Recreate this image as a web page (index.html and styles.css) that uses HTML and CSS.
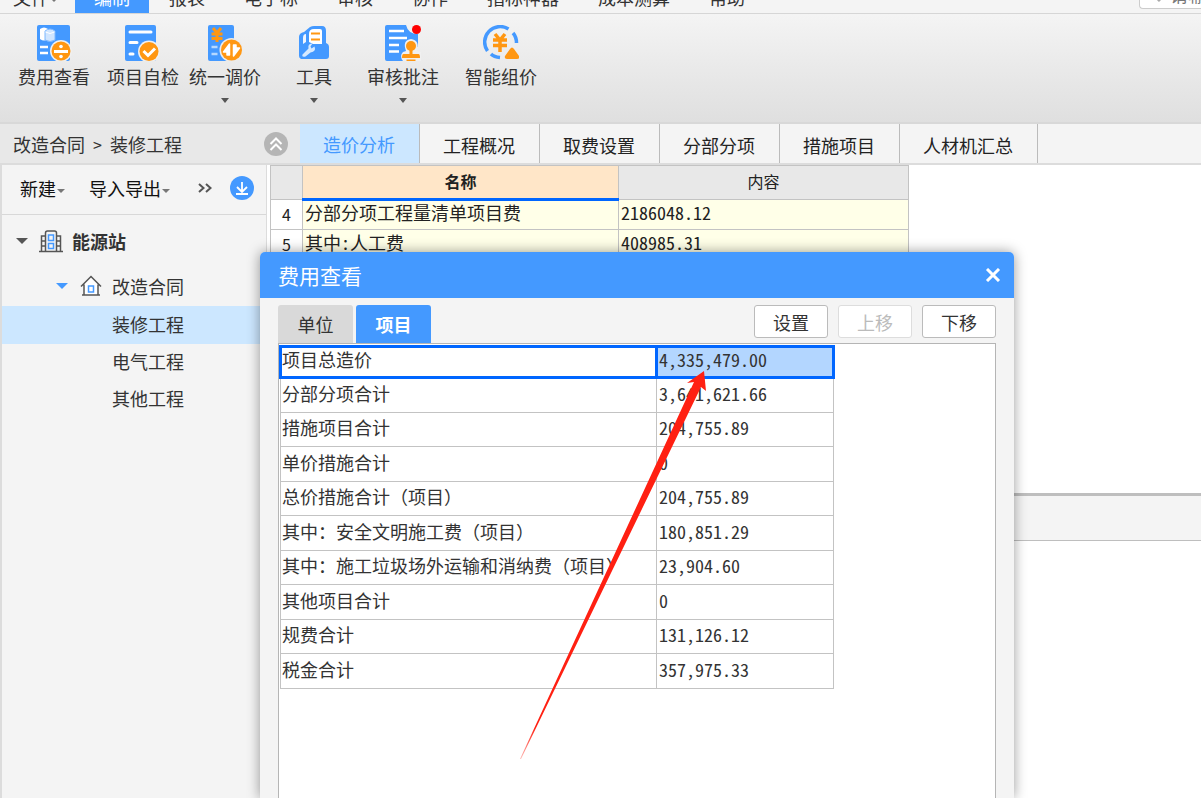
FILE: index.html
```html
<!DOCTYPE html>
<html lang="zh-CN">
<head>
<meta charset="utf-8">
<meta name="viewport" content="width=device-width, initial-scale=1">
<title>费用查看</title>
<link rel="stylesheet" href="styles.css">
</head>
<body>
<div class="app">
  <header class="menubar">
    <nav class="menu">
      <button class="menu-item menu-file" type="button">文件<span class="caret caret-small"></span></button>
      <button class="menu-item is-active" type="button">编制</button>
      <button class="menu-item" type="button">报表</button>
      <button class="menu-item" type="button">电子标</button>
      <button class="menu-item" type="button">审核</button>
      <button class="menu-item" type="button">协作</button>
      <button class="menu-item" type="button">指标神器</button>
      <button class="menu-item" type="button">成本测算</button>
      <button class="menu-item" type="button">帮助</button>
    </nav>
    <label class="search">
      <svg class="search-icon" viewBox="0 0 18 18" aria-hidden="true"><circle cx="7" cy="7" r="5" fill="none" stroke="#aaa" stroke-width="2"/><path d="M11 11l5 5" stroke="#aaa" stroke-width="3"/></svg>
      <input class="search-input" type="text" placeholder="请输入" aria-label="搜索">
    </label>
  </header>

  <div class="ribbon">
    <button class="tool" type="button">
      <svg class="tool-icon" viewBox="0 0 36 36" aria-hidden="true">
        <rect x="1" y="0" width="33" height="36" rx="2" fill="#49f"/>
        <path d="M4 4q4-3 8 0v10q-4 3-8 0z" fill="#fff"/>
        <path d="M9 6q5-4 10 0v9q-5 3-10 0z" fill="#cfe5ff" stroke="#7db8ff" stroke-width="1"/>
        <path d="M9.500 7q4.500 3 9 0" fill="none" stroke="#fff" stroke-width="1"/>
        <path d="M4 22h8M4 28h8" stroke="#fff" stroke-width="2.500"/>
        <circle cx="25" cy="26" r="11" fill="#f0f0f0"/><circle cx="25" cy="26" r="9.500" fill="#ff9712"/>
        <path d="M18 26.500h14" stroke="#fff" stroke-width="3"/><circle cx="25" cy="21.500" r="1.800" fill="#fff"/><circle cx="25" cy="31.500" r="1.800" fill="#fff"/>
      </svg>
      <span>费用查看</span>
    </button>
    <button class="tool" type="button">
      <svg class="tool-icon" viewBox="0 0 36 36" aria-hidden="true">
        <rect x="0" y="0" width="31" height="36" rx="2" fill="#49f"/>
        <path d="M5 7h21M5 17.500h7M5 29h3" stroke="#fff" stroke-width="3" stroke-linecap="round"/>
        <circle cx="24" cy="26.500" r="11" fill="#f0f0f0"/><circle cx="24" cy="26.500" r="9.500" fill="#ff9712"/>
        <path d="M18.500 26l4.500 4.500 7-7" fill="none" stroke="#fff" stroke-width="3"/>
      </svg>
      <span>项目自检</span>
    </button>
    <button class="tool tool-near" type="button">
      <svg class="tool-icon" viewBox="0 0 36 36" aria-hidden="true">
        <rect x="1" y="0" width="26" height="36" rx="2" fill="#49f"/>
        <path d="M6 3l4 5 4-5M4.500 9h11M4.500 13.500h11M10 8v9" fill="none" stroke="#ff9712" stroke-width="3"/>
        <path d="M4.500 22h6M4.500 29h6" stroke="#b5d8ff" stroke-width="2.500"/>
        <circle cx="24.500" cy="25" r="12" fill="#ececec"/><circle cx="24.500" cy="25" r="10.500" fill="#ff9712"/>
        <path d="M22.500 19v11h-2.500v-3h-3.500zM26.500 31V20h2.500v3h3.500z" fill="#fff" stroke="#fff" stroke-width="1.500" stroke-linejoin="round"/>
      </svg>
      <span>统一调价</span>
      <span class="caret"></span>
    </button>
    <button class="tool" type="button">
      <svg class="tool-icon" viewBox="0 0 36 36" aria-hidden="true">
        <path d="M5 34q-2-1-2-3V12q0-4 5-5l6-5q2-1 4-1h8q4 0 4 5v12q3 1 3 4v9q0 3-3 3H6z" fill="#49f"/>
        <path d="M13 17V9q0-5 5-5h6q2 0 2 2v13H17z" fill="#fff"/>
        <path d="M7 19v-6q0-4 3-4v8z" fill="#f0f6ff"/>
        <path d="M15 8.500h9M15 14.500h9" stroke="#ff9712" stroke-width="2.200"/>
        <path d="M6.500 29.500l6-6q-1-5 4-5l-2 3 1 2 3-2q2 5-4 6l-5 4q-4 1-3-2z" fill="#d7eaff"/>
      </svg>
      <span>工具</span>
      <span class="caret"></span>
    </button>
    <button class="tool" type="button">
      <svg class="tool-icon" viewBox="0 0 36 36" aria-hidden="true">
        <path d="M2 0h19q2 9 12 9v13H22v14H2q-2 0-2-2V2q0-2 2-2z" fill="#49f"/>
        <path d="M4 6h15M4 13h18M4 20h10M4 26.500h10" stroke="#fff" stroke-width="2.500"/>
        <path d="M18 36q-4-5 0-9l3-1q-4-11 5-12 9 1 6 12l4 1v9z" fill="#f0f0f0"/>
        <circle cx="26" cy="21" r="5" fill="#ff9712"/><path d="M24.500 24h3v5h6q1.500 0 1.500 4H17q0-4 1.500-4h6zM21.500 34.500h9V36h-9z" fill="#ff9712"/>
        <circle cx="31.500" cy="4.500" r="4.500" fill="#f00"/>
      </svg>
      <span>审核批注</span>
      <span class="caret"></span>
    </button>
    <button class="tool tool-far" type="button">
      <svg class="tool-icon" viewBox="0 0 36 36" aria-hidden="true">
        <g fill="none" stroke="#49f" stroke-width="3.500"><path d="M4.500 26A15.500 15.500 0 0 1 25.500 4"/><path d="M30 8q3.500 4 3.500 10"/><path d="M8 29q3 3 9 3.500"/></g>
        <path d="M12 9l5 6 5-6M10 15h14M10 20.500h14M17 14v13" fill="none" stroke="#ff9712" stroke-width="3.500"/>
        <path d="M22 31l5-7q2-3 4 0l5 7q1 3-2 3H24q-3 0-2-3z" fill="#ff9712"/>
      </svg>
      <span>智能组价</span>
    </button>
  </div>

  <div class="pathbar">
    <div class="breadcrumb">
      <span>改造合同</span><span class="crumb-sep">&gt;</span><span>装修工程</span>
      <button class="round round-grey" type="button" aria-label="收起">
        <svg viewBox="0 0 24 24" aria-hidden="true"><path d="M6.500 12L12 6.500l5.500 5.500M6.500 18l5.500-5.500 5.500 5.500" fill="none" stroke="#fff" stroke-width="2"/></svg>
      </button>
    </div>
    <nav class="tabs">
      <button class="tab is-active" type="button">造价分析</button>
      <button class="tab" type="button">工程概况</button>
      <button class="tab" type="button">取费设置</button>
      <button class="tab" type="button">分部分项</button>
      <button class="tab" type="button">措施项目</button>
      <button class="tab" type="button">人材机汇总</button>
    </nav>
  </div>

  <div class="workspace">
    <aside class="sidebar">
      <div class="side-tools">
        <button class="side-button" type="button">新建<span class="caret caret-small"></span></button>
        <button class="side-button" type="button">导入导出<span class="caret caret-small"></span></button>
        <button class="more" type="button" aria-label="更多"><svg viewBox="0 0 14 10" aria-hidden="true"><path d="M1 1l4.500 4L1 9M8 1l4.500 4L8 9" fill="none" stroke="#555" stroke-width="2"/></svg></button>
        <button class="round round-blue" type="button" aria-label="下载">
          <svg viewBox="0 0 24 24" aria-hidden="true"><path d="M12 6v9M7 11l5 5 5-5M6 18h12" fill="none" stroke="#fff" stroke-width="1.800"/></svg>
        </button>
      </div>
      <ul class="tree">
        <li class="node node-root"><span class="caret caret-large"></span>
          <svg class="node-icon" viewBox="0 0 24 24" aria-hidden="true"><g fill="none" stroke="#555" stroke-width="1.500"><path d="M0 22.500h24M6.500 22V4q0-2 2-2h7q2 0 2 2v18M6.500 7h-4v15M17.500 7h4v15M2.500 12h4M2.500 17h4M17.500 12h4M17.500 17h4"/></g><g fill="none" stroke="#49f" stroke-width="1.500"><path d="M9.500 6h5v5.500h-5zM9.500 14.500h5v5h-5z"/></g></svg>
          <span>能源站</span></li>
        <li class="node node-branch"><span class="caret caret-large caret-blue"></span>
          <svg class="node-icon" viewBox="0 0 24 24" aria-hidden="true"><path d="M5 10.500L12 4l7 6.500V21H5z" fill="#fff"/><path d="M2 12.500l10-10 10 10M5 10.500V21M19 10.500V21M3 21h18" fill="none" stroke="#555" stroke-width="1.500"/><path d="M9.500 12h5v6h-5z" fill="none" stroke="#49f" stroke-width="1.500"/></svg>
          <span>改造合同</span></li>
        <li class="node node-leaf is-selected">装修工程</li>
        <li class="node node-leaf">电气工程</li>
        <li class="node node-leaf">其他工程</li>
      </ul>
    </aside>
    <main class="main">
      <div class="upper">
        <table class="sheet">
          <colgroup><col class="col-index"><col class="col-name"><col class="col-value"></colgroup>
          <thead><tr><th></th><th class="is-current">名称</th><th>内容</th></tr></thead>
          <tbody>
            <tr><th>4</th><td>分部分项工程量清单项目费</td><td class="num">2186048.12</td></tr>
            <tr><th>5</th><td>其中<span class="num">:</span>人工费</td><td class="num">408985.31</td></tr>
          </tbody>
        </table>
      </div>
      <div class="lower"><div class="lower-bar"></div></div>
    </main>
  </div>

  <section class="dialog" role="dialog" aria-labelledby="dialog-title">
    <header class="dialog-head">
      <h1 class="dialog-title" id="dialog-title">费用查看</h1>
      <button class="close" type="button" aria-label="关闭"><svg viewBox="0 0 16 14" aria-hidden="true"><path d="M2 1l12 12M14 1L2 13" stroke="#fff" stroke-width="3"/></svg></button>
    </header>
    <div class="dialog-bar">
      <button class="dtab" type="button">单位</button>
      <button class="dtab is-active" type="button">项目</button>
      <div class="actions">
        <button class="action" type="button">设置</button>
        <button class="action" type="button" disabled>上移</button>
        <button class="action" type="button">下移</button>
      </div>
    </div>
    <div class="dialog-body">
      <table class="costs">
        <colgroup><col class="cost-name"><col class="cost-value"></colgroup>
        <tbody>
          <tr class="is-selected"><td>项目总造价</td><td class="num">4,335,479.00</td></tr>
          <tr><td>分部分项合计</td><td class="num">3,641,621.66</td></tr>
          <tr><td>措施项目合计</td><td class="num">204,755.89</td></tr>
          <tr><td>单价措施合计</td><td class="num">0</td></tr>
          <tr><td>总价措施合计（项目）</td><td class="num">204,755.89</td></tr>
          <tr><td>其中：安全文明施工费（项目）</td><td class="num">180,851.29</td></tr>
          <tr><td>其中：施工垃圾场外运输和消纳费（项目）</td><td class="num">23,904.60</td></tr>
          <tr><td>其他项目合计</td><td class="num">0</td></tr>
          <tr><td>规费合计</td><td class="num">131,126.12</td></tr>
          <tr><td>税金合计</td><td class="num">357,975.33</td></tr>
        </tbody>
      </table>
    </div>
    <svg class="pointer" viewBox="0 0 188 390" aria-hidden="true">
      <defs><linearGradient id="fade" x1="0" y1="1" x2="0" y2="0"><stop offset="0" stop-color="#ff2012" stop-opacity=".3"/><stop offset=".08" stop-color="#ff2012"/></linearGradient></defs>
      <path d="M184 1l2 20-5-4L1 389H0L174 12l-7 1z" fill="url(#fade)"/>
    </svg>
  </section>
</div>
</body>
</html>
```
FILE: styles.css
```css
* { box-sizing: border-box; }

body {
  margin: 0;
  overflow: hidden;
  background: #fff;
  color: #333;
  font: 18px/24px "Noto Sans CJK SC", sans-serif;
}

button, input {
  margin: 0;
  padding: 0;
  border: 0;
  background: none;
  color: inherit;
  font: inherit;
}

.app {
  position: relative;
  display: flex;
  flex-direction: column;
  height: 100vh;
  overflow: hidden;
}

.caret {
  display: inline-block;
  border: 4px solid transparent;
  border-top: 5px solid #555;
  border-bottom: 0;
}
.caret-small { border-width: 4px 4px 0; margin-left: 1px; vertical-align: 3px; border-top-color: #777; }
.caret-large { border-width: 6px 6px 0; }
.caret-blue { border-top-color: #49f; }

.num { font-feature-settings: "hwid"; }

/* Menu bar */
.menubar {
  display: flex;
  align-items: flex-end;
  flex: none;
  height: 14px;
  overflow: hidden;
  border-bottom: 1px solid #d6d6d6;
  background: #f4f4f4;
}
.menu { display: flex; gap: 1px; }
.menu-item { padding: 0 19px 4px; line-height: 24px; white-space: nowrap; }
.menu-item.menu-file { padding: 0 16px 4px 13px; }
.menu-item.is-active { background: #49f; color: #fff; }
.search {
  display: flex;
  align-items: center;
  gap: 8px;
  width: 62px;
  height: 28px;
  margin: 0 0 4px auto;
  padding: 0 0 2px 4px;
  overflow: hidden;
  border: 1px solid #ccc;
  border-right: 0;
  border-radius: 4px 0 0 4px;
  background: #fff;
}
.search-icon { flex: none; width: 18px; height: 18px; }
.search-input { flex: none; width: 60px; }
.search-input::placeholder { color: #777; opacity: 1; }

/* Ribbon */
.ribbon {
  display: flex;
  gap: 17px;
  flex: none;
  height: 110px;
  padding: 11px 18px 0;
  border-bottom: 2px solid #d8d8d8;
  background: linear-gradient(#f4f4f4, #dfdfdf);
}
.tool {
  display: flex;
  flex-direction: column;
  align-items: center;
  gap: 3px;
  width: 72px;
  white-space: nowrap;
}
.tool .caret { margin-top: 7px; }
.tool-near { margin-left: -7px; }
.tool-far { margin-left: 9px; }
.tool-icon { flex: none; width: 36px; height: 36px; }

/* Path and page tabs */
.pathbar {
  display: flex;
  flex: none;
  height: 41px;
  border-bottom: 2px solid #dcdcdc;
  background: #f4f4f4;
}
.breadcrumb {
  display: flex;
  align-items: center;
  gap: 8px;
  flex: none;
  width: 300px;
  padding: 0 12px 0 13px;
  background: #e8e8e8;
}
.crumb-sep { font-size: 16px; }
.round { width: 24px; height: 24px; border-radius: 50%; }
.round svg { display: block; width: 24px; height: 24px; }
.round-grey { margin-left: auto; background: #b5b5b5; }
.round-blue { margin-left: auto; background: #49f; }
.tabs { display: flex; }
.tab {
  min-width: 120px;
  padding: 2px 24px 0 23px;
  border-right: 1px solid #bbb;
  color: #222;
  white-space: nowrap;
}
.tab.is-active { background: #cce7ff; color: #49f; padding-top: 0; }

/* Workspace */
.workspace { display: flex; flex: 1; min-height: 0; }
.sidebar {
  flex: none;
  width: 267px;
  border: solid #dcdcdc;
  border-width: 0 1px 0 2px;
  background: #f4f4f4;
}
.side-tools {
  display: flex;
  align-items: center;
  gap: 24px;
  height: 50px;
  padding: 0 10px 3px 18px;
  border-bottom: 1px solid #d8d8d8;
  color: #111;
}
.side-tools .more { margin-left: 4px; }
.side-tools .round { margin-left: -6px; }
.side-button { white-space: nowrap; }
.more svg { display: block; width: 14px; height: 10px; }
.tree { margin: 0; padding: 0; list-style: none; }
.node { display: flex; align-items: center; height: 37px; padding-bottom: 3px; }
.node-icon { width: 24px; height: 24px; margin: 0 9px 0 11px; }
.node-root { height: 54px; padding-left: 14px; font-weight: 700; }
.node-branch { padding-left: 54px; }
.node-leaf { padding-left: 110px; }
.node.is-selected { height: 38px; background: #cce7ff; }

.main { display: flex; flex: 1; flex-direction: column; min-width: 0; }
.upper { flex: 1; min-height: 0; overflow: hidden; padding-left: 3px; }
.lower { height: 305px; border-top: 3px solid #bebebe; }
.lower-bar { height: 45px; border-bottom: 1px solid #bebebe; background: #f4f4f4; }

.sheet { width: 639px; border-collapse: collapse; table-layout: fixed; color: #222; }
.sheet th, .sheet td {
  height: 30px;
  padding: 0 3px 2px;
  border: 1px solid #c3c3c3;
  line-height: 22px;
  white-space: nowrap;
}
.sheet td { padding: 0 2px 6px; background: #ffffe8; }
.sheet th { font-size: 16px; font-weight: 400; }
.sheet tbody th { background: #fff; }
.sheet thead th { height: 34px; padding-bottom: 4px; background: #e8e8e8; }
.sheet thead .is-current { padding-bottom: 2px; border-bottom: 3px solid #06f; background: #ffe6c8; font-weight: 700; }
.col-index { width: 32px; }
.col-name { width: 316px; }
.col-value { width: 290px; }

/* Floating dialog */
.dialog {
  position: absolute;
  top: 252px;
  bottom: 0;
  left: 260px;
  display: flex;
  flex-direction: column;
  width: 754px;
  border-radius: 5px 5px 0 0;
  background: #f4f4f4;
  box-shadow: 0 0 13px rgba(0, 0, 0, .4);
}
.dialog-head {
  display: flex;
  align-items: center;
  justify-content: space-between;
  height: 46px;
  padding: 0 13px 0 18px;
  border-radius: 5px 5px 0 0;
  background: #49f;
  color: #fff;
}
.dialog-title { margin: 0; padding-bottom: 1px; font-size: 21px; font-weight: 400; }
.close svg { display: block; width: 16px; height: 14px; }
.dialog-bar { display: flex; gap: 3px; height: 45px; padding: 7px 18px 0; }
.dtab { width: 75px; border-radius: 3px 3px 0 0; background: #d9d9d9; }
.dtab.is-active { background: #49f; color: #fff; font-weight: 700; }
.actions { display: flex; gap: 10px; margin-left: auto; }
.action {
  width: 74px;
  height: 33px;
  border: 1px solid #bbb;
  border-radius: 3px;
  background: #fff;
}
.action:disabled { border-color: #ddd; color: #bbb; }
.dialog-body {
  flex: 1;
  margin: 0 18px;
  padding-top: 1px;
  border: 1px solid #b5b5b5;
  border-bottom: 0;
  background: #fff;
}
.costs { width: 553px; border-collapse: collapse; table-layout: fixed; }
.costs td {
  height: 34px;
  padding: 0 1px 5px;
  border: 1px solid #c3c3c3;
  line-height: 24px;
  white-space: nowrap;
}
.costs tr:nth-child(even) td { height: 35px; }
.costs td.num { padding-left: 2px; }
.costs tr.is-selected td { height: 31px; border: 3px solid #06f; padding: 0 0 6px; line-height: 22px; }
.costs tr.is-selected .num { padding-left: 1px; background: #b3d6ff; }
.cost-name { width: 376px; }
.cost-value { width: 177px; }

/* Annotation arrow over the dialog */
.pointer {
  position: absolute;
  top: 118px;
  left: 260px;
  width: 188px;
  height: 390px;
  pointer-events: none;
}
```
